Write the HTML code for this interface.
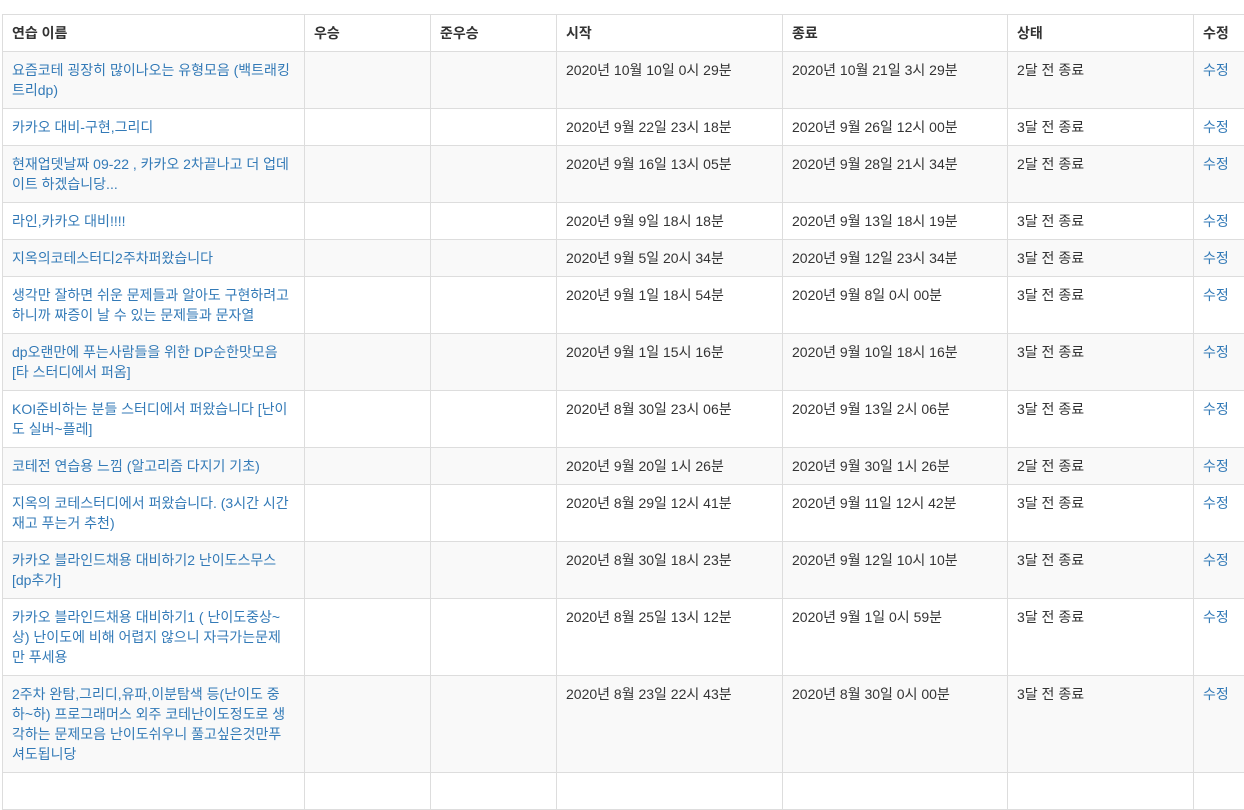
<!DOCTYPE html>
<html><head><meta charset="utf-8"><style>
html,body{margin:0;padding:0;background:#fff;overflow:hidden;width:1244px;height:778px}
body{font-family:"Liberation Sans","Noto Sans CJK KR",sans-serif;font-size:14px;color:#333;letter-spacing:0}
table{position:absolute;left:2px;top:14px;border-collapse:collapse;table-layout:fixed;width:1270px}
td,th{border:1px solid #ddd;padding:8px 8px 8px 9px;line-height:20px;height:20px;vertical-align:top;text-align:left;white-space:nowrap;overflow:hidden}
th{font-weight:bold}
tbody tr:nth-child(odd){background:#f9f9f9}
a{color:#337ab7;text-decoration:none}
</style></head><body>
<table>
<colgroup><col style="width:302px"><col style="width:126px"><col style="width:126px"><col style="width:226px"><col style="width:225px"><col style="width:186px"><col style="width:79px"></colgroup>
<thead><tr><th>연습 이름</th><th>우승</th><th>준우승</th><th>시작</th><th>종료</th><th>상태</th><th>수정</th></tr></thead>
<tbody>
<tr><td><a>요즘코테 굉장히 많이나오는 유형모음 (백트래킹<br>트리dp)</a></td><td></td><td></td><td>2020년 10월 10일 0시 29분</td><td>2020년 10월 21일 3시 29분</td><td>2달 전 종료</td><td><a>수정</a></td></tr>
<tr><td><a>카카오 대비-구현,그리디</a></td><td></td><td></td><td>2020년 9월 22일 23시 18분</td><td>2020년 9월 26일 12시 00분</td><td>3달 전 종료</td><td><a>수정</a></td></tr>
<tr><td><a>현재업뎃날짜 09-22 , 카카오 2차끝나고 더 업데<br>이트 하겠습니당...</a></td><td></td><td></td><td>2020년 9월 16일 13시 05분</td><td>2020년 9월 28일 21시 34분</td><td>2달 전 종료</td><td><a>수정</a></td></tr>
<tr><td><a>라인,카카오 대비!!!!</a></td><td></td><td></td><td>2020년 9월 9일 18시 18분</td><td>2020년 9월 13일 18시 19분</td><td>3달 전 종료</td><td><a>수정</a></td></tr>
<tr><td><a>지옥의코테스터디2주차퍼왔습니다</a></td><td></td><td></td><td>2020년 9월 5일 20시 34분</td><td>2020년 9월 12일 23시 34분</td><td>3달 전 종료</td><td><a>수정</a></td></tr>
<tr><td><a>생각만 잘하면 쉬운 문제들과 알아도 구현하려고<br>하니까 짜증이 날 수 있는 문제들과 문자열</a></td><td></td><td></td><td>2020년 9월 1일 18시 54분</td><td>2020년 9월 8일 0시 00분</td><td>3달 전 종료</td><td><a>수정</a></td></tr>
<tr><td><a>dp오랜만에 푸는사람들을 위한 DP순한맛모음<br>[타 스터디에서 퍼옴]</a></td><td></td><td></td><td>2020년 9월 1일 15시 16분</td><td>2020년 9월 10일 18시 16분</td><td>3달 전 종료</td><td><a>수정</a></td></tr>
<tr><td><a>KOI준비하는 분들 스터디에서 퍼왔습니다 [난이<br>도 실버~플레]</a></td><td></td><td></td><td>2020년 8월 30일 23시 06분</td><td>2020년 9월 13일 2시 06분</td><td>3달 전 종료</td><td><a>수정</a></td></tr>
<tr><td><a>코테전 연습용 느낌 (알고리즘 다지기 기초)</a></td><td></td><td></td><td>2020년 9월 20일 1시 26분</td><td>2020년 9월 30일 1시 26분</td><td>2달 전 종료</td><td><a>수정</a></td></tr>
<tr><td><a>지옥의 코테스터디에서 퍼왔습니다. (3시간 시간<br>재고 푸는거 추천)</a></td><td></td><td></td><td>2020년 8월 29일 12시 41분</td><td>2020년 9월 11일 12시 42분</td><td>3달 전 종료</td><td><a>수정</a></td></tr>
<tr><td><a>카카오 블라인드채용 대비하기2 난이도스무스<br>[dp추가]</a></td><td></td><td></td><td>2020년 8월 30일 18시 23분</td><td>2020년 9월 12일 10시 10분</td><td>3달 전 종료</td><td><a>수정</a></td></tr>
<tr><td><a>카카오 블라인드채용 대비하기1 ( 난이도중상~<br>상) 난이도에 비해 어렵지 않으니 자극가는문제<br>만 푸세용</a></td><td></td><td></td><td>2020년 8월 25일 13시 12분</td><td>2020년 9월 1일 0시 59분</td><td>3달 전 종료</td><td><a>수정</a></td></tr>
<tr><td><a>2주차 완탐,그리디,유파,이분탐색 등(난이도 중<br>하~하) 프로그래머스 외주 코테난이도정도로 생<br>각하는 문제모음 난이도쉬우니 풀고싶은것만푸<br>셔도됩니당</a></td><td></td><td></td><td>2020년 8월 23일 22시 43분</td><td>2020년 8월 30일 0시 00분</td><td>3달 전 종료</td><td><a>수정</a></td></tr>
<tr><td><a>&nbsp;</a></td><td></td><td></td><td></td><td></td><td></td><td></td></tr>
</tbody></table>
</body></html>
